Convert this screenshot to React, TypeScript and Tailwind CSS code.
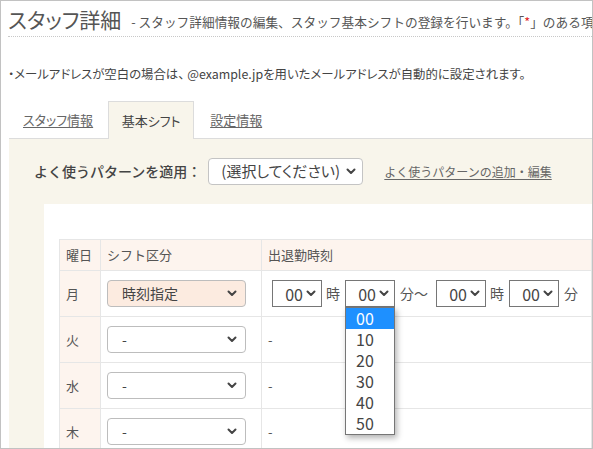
import React from "react";

const FONT = "font-['Noto_Sans_CJK_JP','Noto_Sans',sans-serif]";
const PALT = "[font-feature-settings:'palt']";

function Chevron({ className = "" }: { className?: string }) {
  return (
    <svg viewBox="0 0 10 7" className={"h-[7px] w-[10px] " + className} fill="none">
      <path d="M1.5 1.5 5 5l3.5-3.5" stroke="#444" strokeWidth="2" strokeLinecap="round" strokeLinejoin="round" />
    </svg>
  );
}

function ShiftSelect({ value, active = false }: { value: string; active?: boolean }) {
  return (
    <div
      className={
        "flex h-[27px] w-[139px] items-center justify-between rounded-[4px] border border-[#bdbdbd] pl-[14px] pr-[8px] text-[14px] text-[#444] " +
        (active ? "bg-[#fcebe0]" : "bg-white")
      }
    >
      <span>{value}</span>
      <Chevron />
    </div>
  );
}

function TimeSelect({ open = false }: { open?: boolean }) {
  return (
    <div className="relative">
      <div className="flex h-[27px] w-[50px] items-center justify-end gap-[3px] border border-[#767676] bg-white pr-[5px] text-[16px] text-[#444]">
        <span>00</span>
        <Chevron />
      </div>
      {open && (
        <ul className="absolute left-0 top-[27px] z-10 w-[50px] border border-[#767676] bg-white text-[16px] leading-[21px] text-[#444] shadow-[2px_3px_6px_rgba(0,0,0,0.3)]">
          {["00", "10", "20", "30", "40", "50"].map((v, i) => (
            <li key={v} className={"h-[21px] pl-[10px] " + (i === 0 ? "bg-[#1e90ff] text-white" : "")}>
              {v}
            </li>
          ))}
        </ul>
      )}
    </div>
  );
}

const days = ["月", "火", "水", "木"];

export default function App() {
  return (
    <div className={"h-[449px] w-[593px] overflow-hidden border border-[#c2c2c2] bg-white text-[#555] " + FONT}>
      {/* タイトル */}
      <div className="ml-[7px] flex items-end gap-[10px] overflow-hidden whitespace-nowrap border-b border-dotted border-[#c8c8c8] pb-[3px] pt-[4px]">
        <h1 className={"text-[21px] leading-[28px] text-[#555] " + PALT}>スタッフ詳細</h1>
        <p className="pb-[2px] text-[12.7px] leading-[18px] text-[#555]">
          - スタッフ詳細情報の編集、スタッフ基本シフトの登録を行います。「<span className="text-[#e02020]">*</span>」のある項目は必須です。
        </p>
      </div>

      <p className={"ml-[7px] mt-[27px] whitespace-nowrap text-[12.4px] leading-[20px] text-[#444] " + PALT}>
        ・メールアドレスが空白の場合は、 @example.jpを用いたメールアドレスが自動的に設定されます。
      </p>

      {/* タブ */}
      <div className="ml-[8px] mt-[17px]">
        <div className={"flex h-[37px] items-end text-[13px] " + PALT}>
          <a className="mb-[9px] ml-[14px] mr-[15px] text-[#666] underline underline-offset-2">スタッフ情報</a>
          <div className="-mb-px flex h-[38px] w-[86px] items-center justify-center border border-b-0 border-[#dcdcdc] bg-[#f8f5eb] text-[#444]">
            基本シフト
          </div>
          <a className="mb-[9px] ml-[16px] text-[#666] underline underline-offset-2">設定情報</a>
        </div>

        <div className="border-t border-[#dcdcdc] bg-[#f8f5eb]">
          <div className="flex h-[65px] items-center pl-[25px]">
            <span className="text-[14px] font-medium text-[#444]">よく使うパターンを適用：</span>
            <div className="ml-[7px] flex h-[27px] w-[155px] items-center justify-between rounded-[4px] border border-[#c4c4c4] bg-white pl-[12px] pr-[6px] text-[15px] text-[#444]">
              <span className={PALT}>(選択してください)</span>
              <Chevron />
            </div>
            <a className="ml-[21px] text-[12px] text-[#666] underline underline-offset-2">よく使うパターンの追加・編集</a>
          </div>

          <div className="ml-[35px] bg-white pl-[15px] pt-[35px]">
            <table className="w-full border-collapse text-[13px] text-[#555]">
              <thead>
                <tr className="h-[31px] bg-[#fdf4ee]">
                  <th className="w-[41px] border border-[#e6e6e6] pl-[6px] text-left font-normal">曜日</th>
                  <th className="w-[161px] border border-[#e6e6e6] pl-[6px] text-left font-normal">シフト区分</th>
                  <th className="border border-[#e6e6e6] pl-[6px] text-left font-normal">出退勤時刻</th>
                </tr>
              </thead>
              <tbody>
                {days.map((d, i) => (
                  <tr key={d} className="h-[46px]">
                    <td className="border border-[#e6e6e6] bg-[#fdf4ee] pl-[6px]">{d}</td>
                    <td className="border border-[#e6e6e6] pl-[6px]">
                      <ShiftSelect value={i === 0 ? "時刻指定" : "-"} active={i === 0} />
                    </td>
                    <td className="border border-[#e6e6e6] pl-[10px]">
                      {i === 0 ? (
                        <div className="flex items-center text-[14px] text-[#555]">
                          <TimeSelect />
                          <span className="ml-[4px] mr-[5px]">時</span>
                          <TimeSelect open />
                          <span className="ml-[5px] mr-[8px]">分～</span>
                          <TimeSelect />
                          <span className="ml-[4px] mr-[5px]">時</span>
                          <TimeSelect />
                          <span className="ml-[5px]">分</span>
                        </div>
                      ) : (
                        <span className="-ml-[4px]">-</span>
                      )}
                    </td>
                  </tr>
                ))}
              </tbody>
            </table>
          </div>
        </div>
      </div>
    </div>
  );
}
